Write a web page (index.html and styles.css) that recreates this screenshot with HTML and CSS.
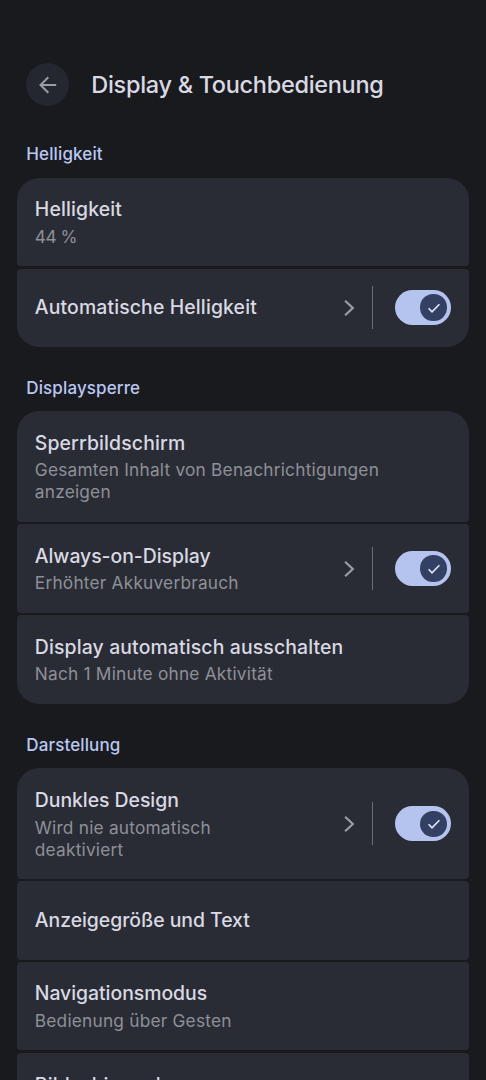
FILE: index.html
```html
<!DOCTYPE html>
<html lang="de">
<head>
<meta charset="utf-8">
<title>Display &amp; Touchbedienung</title>
<link rel="stylesheet" href="styles.css">
</head>
<body>
<svg width="0" height="0" class="defs">
  <symbol id="chevron" viewBox="0 0 12 18"><path d="M2.1 1.8 9.8 9 2.1 16.2"/></symbol>
  <symbol id="check" viewBox="0 0 14 12"><path d="M1.6 6.3 5 9.8 12.4 2.2"/></symbol>
</svg>
<main class="screen">
  <header class="topbar">
    <button class="back" aria-label="Zurück"><svg viewBox="0 0 18 18"><path d="M17.2 9H1.8M9.3 1.2 1.5 9l7.8 7.8"/></svg></button>
    <h1 class="heading">Display &amp; Touchbedienung</h1>
  </header>

  <h2 class="label">Helligkeit</h2>
  <section class="group">
    <div class="row"><div class="text"><div class="title">Helligkeit</div><div class="sub figures">44 %</div></div></div>
    <div class="row single"><div class="text"><div class="title">Automatische Helligkeit</div></div><svg class="chevron"><use href="#chevron"/></svg><span class="divider"></span><span class="switch"><span class="thumb"><svg class="check"><use href="#check"/></svg></span></span></div>
  </section>

  <h2 class="label">Displaysperre</h2>
  <section class="group">
    <div class="row triple"><div class="text"><div class="title">Sperrbildschirm</div><div class="sub">Gesamten Inhalt von Benachrichtigungen<br>anzeigen</div></div></div>
    <div class="row"><div class="text"><div class="title snug">Always-on-Display</div><div class="sub">Erhöhter Akkuverbrauch</div></div><svg class="chevron"><use href="#chevron"/></svg><span class="divider"></span><span class="switch"><span class="thumb"><svg class="check"><use href="#check"/></svg></span></span></div>
    <div class="row"><div class="text"><div class="title">Display automatisch ausschalten</div><div class="sub">Nach 1 Minute ohne Aktivität</div></div></div>
  </section>

  <h2 class="label">Darstellung</h2>
  <section class="group">
    <div class="row triple"><div class="text"><div class="title snug">Dunkles Design</div><div class="sub">Wird nie automatisch<br>deaktiviert</div></div><svg class="chevron"><use href="#chevron"/></svg><span class="divider"></span><span class="switch"><span class="thumb"><svg class="check"><use href="#check"/></svg></span></span></div>
    <div class="row single"><div class="text"><div class="title snug">Anzeigegröße und Text</div></div></div>
    <div class="row"><div class="text"><div class="title snug">Navigationsmodus</div><div class="sub">Bedienung über Gesten</div></div></div>
    <div class="row peek"><div class="text"><div class="title">Bildschirmschoner</div></div></div>
  </section>
</main>
</body>
</html>
```
FILE: styles.css
```css
* { box-sizing: border-box; }
body { margin: 0; background: #191a1e; font-family: Inter, Roboto, sans-serif; }
.defs { display: block; height: 0; }
.screen { height: 1080px; overflow: hidden; padding: 62.7px 17.5px 0 17.3px; }
.topbar { display: flex; align-items: center; gap: 22px; padding-left: 8.5px; height: 44px; }
.back { display: grid; place-items: center; width: 43.5px; height: 43.5px; padding: 0; border: 0; border-radius: 50%; background: #242730; }
.back svg { width: 18px; height: 18px; fill: none; stroke: #9b9ca5; stroke-width: 2; }
.heading { margin: 0; font-size: 23.5px; font-weight: 500; line-height: 32px; color: #d9d9e3; letter-spacing: -0.3px; white-space: nowrap; }
.label { margin: 0; height: 64.6px; padding: 29px 0 0 9px; font-size: 17px; line-height: 24px; font-weight: 500; color: #b9c7f2; letter-spacing: 0.12px; }
.topbar + .label { height: 71px; padding-top: 35px; }
.group { display: grid; gap: 2.3px; }
.row { display: flex; align-items: center; height: 88.6px; padding: 0 17.5px; border-radius: 4px; background: #2a2c35; }
.row.single { height: 78.2px; }
.row.triple { height: 110.7px; }
.row.peek { padding-bottom: 24px; }
.row:first-child { border-top-left-radius: 22px; border-top-right-radius: 22px; }
.row:last-child { border-bottom-left-radius: 22px; border-bottom-right-radius: 22px; }
.text { flex: 1; white-space: nowrap; }
.title { font-size: 19.4px; line-height: 27px; font-weight: 500; color: #d9d9e3; letter-spacing: 0.14px; }
.title.snug { letter-spacing: -0.03px; }
.sub { margin-top: 2.5px; font-size: 17.3px; line-height: 22px; color: #8e9098; letter-spacing: 0.21px; }
.sub.figures { letter-spacing: -0.5px; }
.chevron { width: 12px; height: 18px; fill: none; stroke: #9b9ca5; stroke-width: 2.2; }
.divider { width: 1.3px; height: 43px; margin: 0 21.5px 0 16.5px; background: #6c6e77; }
.switch { display: flex; justify-content: flex-end; align-items: center; width: 56.5px; height: 35px; padding-right: 4.3px; border-radius: 18px; background: #b5c4ee; }
.thumb { display: grid; place-items: center; width: 26.4px; height: 26.4px; border-radius: 50%; background: #334063; }
.check { width: 14px; height: 12px; fill: none; stroke: #e3e8fa; stroke-width: 1.6; }
```
